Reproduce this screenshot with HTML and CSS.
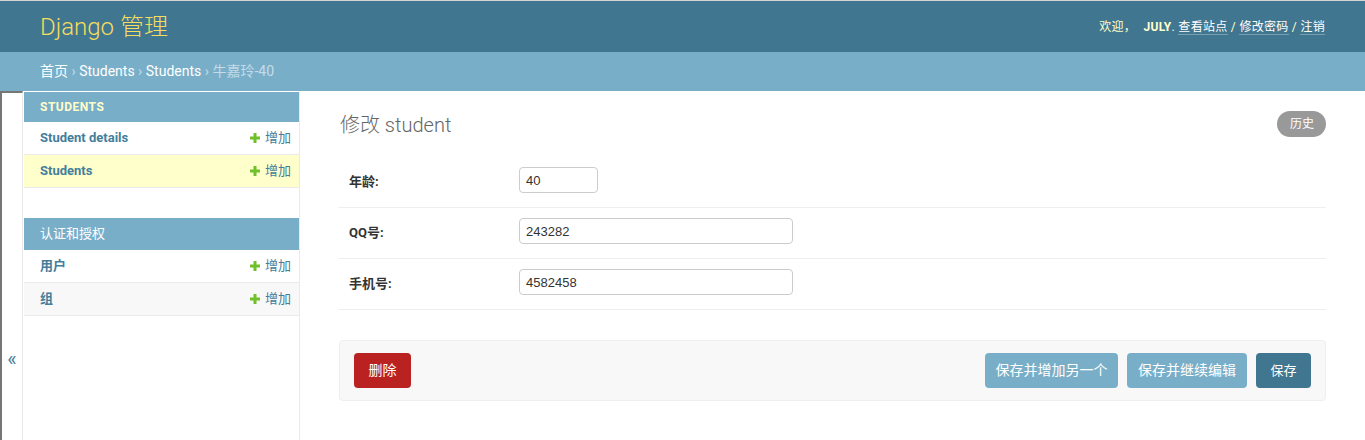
FILE: index.html
```html
<!DOCTYPE html>
<html lang="zh-hans">
<head>
<meta charset="utf-8">
<title>修改 student | Django 站点管理员</title>
<link rel="stylesheet" href="styles.css">
</head>
<body>
<div class="header">
  <div class="branding">Django 管理</div>
  <div class="user-tools">欢迎， <strong>JULY</strong>. <a class="ut-link" href="#">查看站点</a> / <a class="ut-link" href="#">修改密码</a> / <a class="ut-link" href="#">注销</a></div>
</div>
<div class="breadcrumbs"><a href="#">首页</a> › <a href="#">Students</a> › <a href="#">Students</a> › 牛嘉玲-40</div>
<div class="main">
  <button class="toggle-sidebar" type="button">«</button>
  <nav class="sidebar">
    <div class="module">
      <div class="caption current">STUDENTS</div>
      <div class="nav-row">
        <a class="model-link" href="#">Student details</a>
        <a class="addlink" href="#"><svg class="plus" viewBox="0 0 10 10" width="10" height="10"><rect x="3.5" y="0" width="3" height="10" fill="#70bf2b"/><rect x="0" y="3.5" width="10" height="3" fill="#70bf2b"/></svg>增加</a>
      </div>
      <div class="nav-row selected">
        <a class="model-link" href="#">Students</a>
        <a class="addlink" href="#"><svg class="plus" viewBox="0 0 10 10" width="10" height="10"><rect x="3.5" y="0" width="3" height="10" fill="#70bf2b"/><rect x="0" y="3.5" width="10" height="3" fill="#70bf2b"/></svg>增加</a>
      </div>
    </div>
    <div class="module">
      <div class="caption cjk">认证和授权</div>
      <div class="nav-row">
        <a class="model-link" href="#">用户</a>
        <a class="addlink" href="#"><svg class="plus" viewBox="0 0 10 10" width="10" height="10"><rect x="3.5" y="0" width="3" height="10" fill="#70bf2b"/><rect x="0" y="3.5" width="10" height="3" fill="#70bf2b"/></svg>增加</a>
      </div>
      <div class="nav-row alt">
        <a class="model-link" href="#">组</a>
        <a class="addlink" href="#"><svg class="plus" viewBox="0 0 10 10" width="10" height="10"><rect x="3.5" y="0" width="3" height="10" fill="#70bf2b"/><rect x="0" y="3.5" width="10" height="3" fill="#70bf2b"/></svg>增加</a>
      </div>
    </div>
  </nav>
  <div class="content">
    <div class="title-row">
      <h1 class="title">修改 student</h1>
      <a class="history" href="#">历史</a>
    </div>
    <form class="change-form">
      <div class="form-row">
        <label class="field-label">年龄:</label>
        <input class="vInteger" type="text" value="40">
      </div>
      <div class="form-row">
        <label class="field-label">QQ号:</label>
        <input class="vText" type="text" value="243282">
      </div>
      <div class="form-row">
        <label class="field-label">手机号:</label>
        <input class="vText" type="text" value="4582458">
      </div>
      <div class="submit-row">
        <a class="btn delete" href="#">删除</a>
        <div class="save-group">
          <span class="btn light add-another">保存并增加另一个</span>
          <span class="btn light continue">保存并继续编辑</span>
          <span class="btn default">保存</span>
        </div>
      </div>
    </form>
  </div>
</div>
</body>
</html>
```
FILE: styles.css
```css
html, body {
  margin: 0;
  padding: 0;
}
body {
  font-family: Roboto, "Noto Sans CJK SC", "Liberation Sans", sans-serif;
  font-size: 14px;
  color: #333;
  background: #fff;
  border-top: 1px solid #d4d4d4;
}
a {
  text-decoration: none;
}
.header {
  height: 51px;
  background: #417690;
  padding: 0 40px;
  display: flex;
  align-items: center;
  justify-content: space-between;
  color: #ffc;
}
.branding {
  font-size: 24px;
  font-weight: 300;
  color: #f5dd5d;
  line-height: 30px;
  padding-top: 1px;
}
.user-tools {
  font-size: 12px;
  letter-spacing: 0.3px;
  color: #ffc;
  padding-bottom: 2px;
}
.user-tools strong {
  font-weight: bold;
  padding-left: 4px;
}
.ut-link {
  color: #fff;
  border-bottom: 1px solid rgba(255,255,255,0.3);
}
.breadcrumbs {
  background: #79aec8;
  height: 39px;
  line-height: 39px;
  padding: 0 40px;
  font-size: 14px;
  color: #c4dce8;
}
.breadcrumbs a {
  color: #fff;
}
.main {
  display: flex;
  min-height: 534px;
}
.toggle-sidebar {
  flex: 0 0 20px;
  width: 20px;
  margin: 0;
  padding: 0;
  border: 0;
  border-left: 2px solid #767676;
  border-top: 2px solid #767676;
  border-right: 1px solid #eaeaea;
  background: #fff;
  color: #447e9b;
  font-size: 20px;
  font-family: Roboto, sans-serif;
  display: flex;
  align-items: center;
  justify-content: center;
  box-sizing: content-box;
}
.sidebar {
  flex: 0 0 275px;
  padding-left: 1px;
  border-right: 1px solid #eaeaea;
}
.module {
  margin-bottom: 30px;
}
.caption {
  background: #79aec8;
  color: #fff;
  font-size: 13px;
  line-height: 14px;
  padding: 8px 8px 8px 16px;
  margin-top: 1px;
}
.caption.cjk {
  line-height: 16px;
}
.caption.current {
  color: #ffc;
  font-weight: bold;
  font-size: 12px;
  letter-spacing: 0.5px;
}
.nav-row {
  display: flex;
  justify-content: space-between;
  align-items: center;
  padding: 8px 8px 8px 16px;
  height: 16px;
  line-height: 16px;
  border-bottom: 1px solid #eaeaea;
  background: #fff;
}
.nav-row.selected {
  background: #ffc;
}
.nav-row.alt {
  background: #f8f8f8;
}
.model-link {
  color: #447e9b;
  font-weight: bold;
  font-size: 13px;
}
.addlink {
  color: #447e9b;
  font-size: 13px;
  display: flex;
  align-items: center;
}
.plus {
  margin-right: 5px;
}
.content {
  flex: 1;
  padding: 19px 39px 20px 39px;
}
.title-row {
  display: flex;
  justify-content: space-between;
  align-items: center;
  height: 27px;
  margin-bottom: 20px;
}
.title {
  margin: 0 0 0 1px;
  font-size: 20px;
  font-weight: 300;
  color: #666;
  line-height: 26px;
  padding-top: 2px;
}
.history {
  background: #999;
  color: #fff;
  font-size: 12px;
  line-height: 26px;
  height: 26px;
  padding: 0 12px 0 13px;
  border-radius: 15px;
}
.change-form {
  margin: 0;
}
.form-row {
  display: flex;
  align-items: flex-start;
  padding: 10px;
  height: 30px;
  border-bottom: 1px solid #eee;
}
.field-label {
  width: 160px;
  padding: 2px 10px 0 0;
  line-height: 26px;
  font-size: 13px;
  font-weight: bold;
  color: #333;
}
.form-row input {
  box-sizing: border-box;
  height: 26px;
  border: 1px solid #ccc;
  border-radius: 4px;
  padding: 5px 6px;
  font-family: "Liberation Sans", Arial, sans-serif;
  font-size: 13px;
  color: #333;
  margin: 0;
}
.vInteger {
  width: 79px;
}
.vText {
  width: 274px;
}
.submit-row {
  margin-top: 30px;
  display: flex;
  justify-content: space-between;
  align-items: center;
  padding: 12px 14px;
  background: #f8f8f8;
  border: 1px solid #eee;
  border-radius: 4px;
}
.save-group {
  display: flex;
  gap: 9px;
}
.btn {
  display: block;
  height: 35px;
  line-height: 35px;
  border-radius: 4px;
  color: #fff;
  font-size: 14px;
  padding: 0;
  text-align: center;
  box-sizing: border-box;
}
.btn.delete {
  background: #ba2121;
  width: 57px;
}
.btn.light {
  background: #79aec8;
  font-size: 14px;
}
.btn.add-another {
  width: 133px;
}
.btn.continue {
  width: 120px;
}
.btn.default {
  background: #417690;
  font-size: 13px;
  width: 55px;
}
```
